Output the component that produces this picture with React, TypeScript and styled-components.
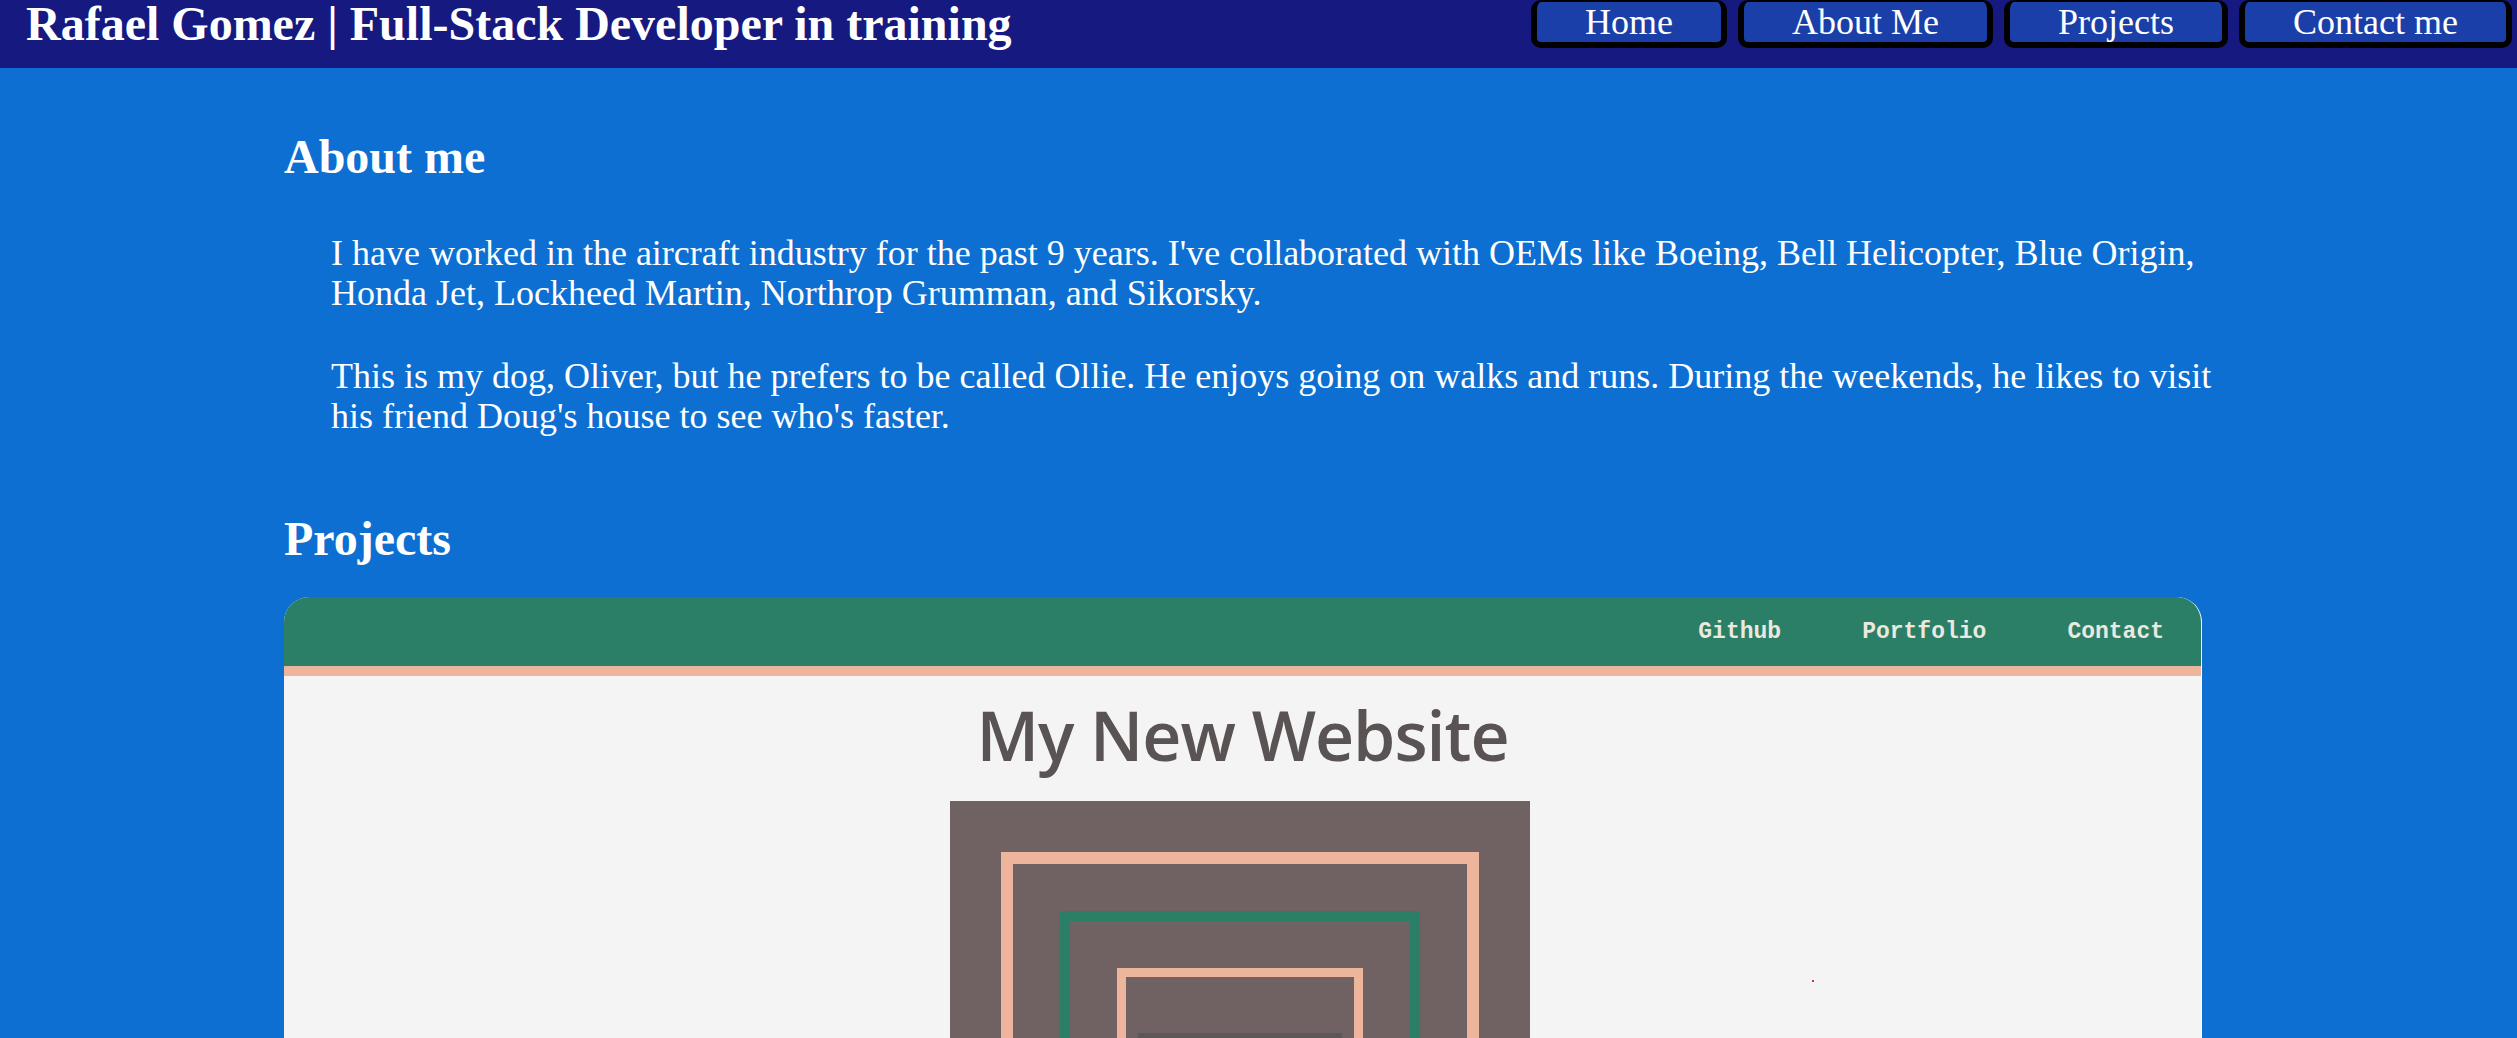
import React from "react";
import styled, { createGlobalStyle } from "styled-components";

const GlobalStyle = createGlobalStyle`
  html, body {
    margin: 0;
    padding: 0;
    background: #0d6fd2;
  }
  body {
    font-family: "Liberation Serif", "Times New Roman", serif;
    color: #ffffff;
  }
`;

const Header = styled.header`
  height: 68px;
  background: #161a80;
  display: flex;
  justify-content: space-between;
  align-items: flex-start;
  padding: 0 5px 0 26px;
  box-sizing: border-box;
`;

const SiteTitle = styled.h1`
  margin: 0;
  font-size: 48px;
  line-height: 1;
  font-weight: 700;
  color: #ffffff;
  white-space: nowrap;
`;

const Nav = styled.nav`
  display: flex;
  gap: 11px;
`;

const NavButton = styled.a`
  display: block;
  background: #1a3fa8;
  color: #ffffff;
  font-size: 36px;
  line-height: 40px;
  padding: 0 48px;
  border: 6px solid #000000;
  border-top-width: 2px;
  border-radius: 10px;
  text-decoration: none;
  white-space: nowrap;
`;

const Main = styled.main`
  padding: 62px 284px 0 284px;
`;

const SectionTitle = styled.h2<{ $gap?: number }>`
  margin: ${(p) => p.$gap ?? 0}px 0 0 0;
  font-size: 48px;
  font-weight: 700;
  line-height: 53px;
`;

const Paragraphs = styled.div`
  margin-top: 50px;
  padding-left: 47px;
  display: flex;
  flex-direction: column;
  gap: 43px;
`;

const Para = styled.p`
  margin: 0;
  font-size: 36px;
  line-height: 40px;
`;

const ProjectCard = styled.div`
  margin-top: 32px;
  width: 1917px;
  border-radius: 25px 25px 0 0;
  overflow: hidden;
  background: #f4f4f4;
  border-right: 1px solid #fbfbfb;
`;

const MiniNav = styled.div`
  height: 69px;
  background: #2b7f66;
  border-bottom: 10px solid #ecb59c;
  display: flex;
  justify-content: flex-end;
  align-items: center;
  gap: 81px;
  padding-right: 37px;
`;

const MiniLink = styled.span`
  font-family: "Liberation Mono", "Courier New", monospace;
  font-weight: 700;
  font-size: 23px;
  color: #ebe8df;
`;

const MiniBody = styled.div`
  position: relative;
  padding: 11px 0 80px;
  display: flex;
  flex-direction: column;
  align-items: center;
`;

const MiniTitle = styled.h1`
  margin: 0;
  font-family: "Open Sans", "Noto Sans", sans-serif;
  font-weight: 600;
  font-size: 68px;
  line-height: 95px;
  color: #595353;
  letter-spacing: -1px;
`;

const Art = styled.svg`
  display: block;
  margin-top: 19px;
  margin-right: 5px;
`;

const Speck = styled.span`
  position: absolute;
  left: 1528px;
  top: 304px;
  width: 2px;
  height: 2px;
  background: #c8384c;
`;

export default function App() {
  return (
    <>
      <GlobalStyle />
      <Header>
        <SiteTitle>Rafael Gomez | Full-Stack Developer in training</SiteTitle>
        <Nav>
          <NavButton href="#home">Home</NavButton>
          <NavButton href="#about">About Me</NavButton>
          <NavButton href="#projects">Projects</NavButton>
          <NavButton href="#contact">Contact me</NavButton>
        </Nav>
      </Header>
      <Main>
        <SectionTitle id="about">About me</SectionTitle>
        <Paragraphs>
          <Para>
            I have worked in the aircraft industry for the past 9 years. I've collaborated with OEMs like Boeing, Bell
            Helicopter, Blue Origin, Honda Jet, Lockheed Martin, Northrop Grumman, and Sikorsky.
          </Para>
          <Para>
            This is my dog, Oliver, but he prefers to be called Ollie. He enjoys going on walks and runs. During the
            weekends, he likes to visit his friend Doug's house to see who's faster.
          </Para>
        </Paragraphs>
        <SectionTitle id="projects" $gap={76}>
          Projects
        </SectionTitle>
        <ProjectCard>
          <MiniNav>
            <MiniLink>Github</MiniLink>
            <MiniLink>Portfolio</MiniLink>
            <MiniLink>Contact</MiniLink>
          </MiniNav>
          <MiniBody>
            <MiniTitle>My New Website</MiniTitle>
            <Art width="580" height="580" viewBox="0 0 580 580">
              <rect x="0" y="0" width="580" height="580" fill="#706262" />
              <rect x="57" y="57" width="466" height="466" fill="none" stroke="#ecb59c" strokeWidth="12" />
              <rect x="115" y="115" width="350" height="350" fill="none" stroke="#2b7f66" strokeWidth="10" />
              <rect x="171.5" y="171.5" width="237" height="237" fill="none" stroke="#ecb59c" strokeWidth="9" />
              <rect x="188" y="232" width="204" height="40" fill="#5d5858" />
            </Art>
            <Speck />
          </MiniBody>
        </ProjectCard>
      </Main>
    </>
  );
}
